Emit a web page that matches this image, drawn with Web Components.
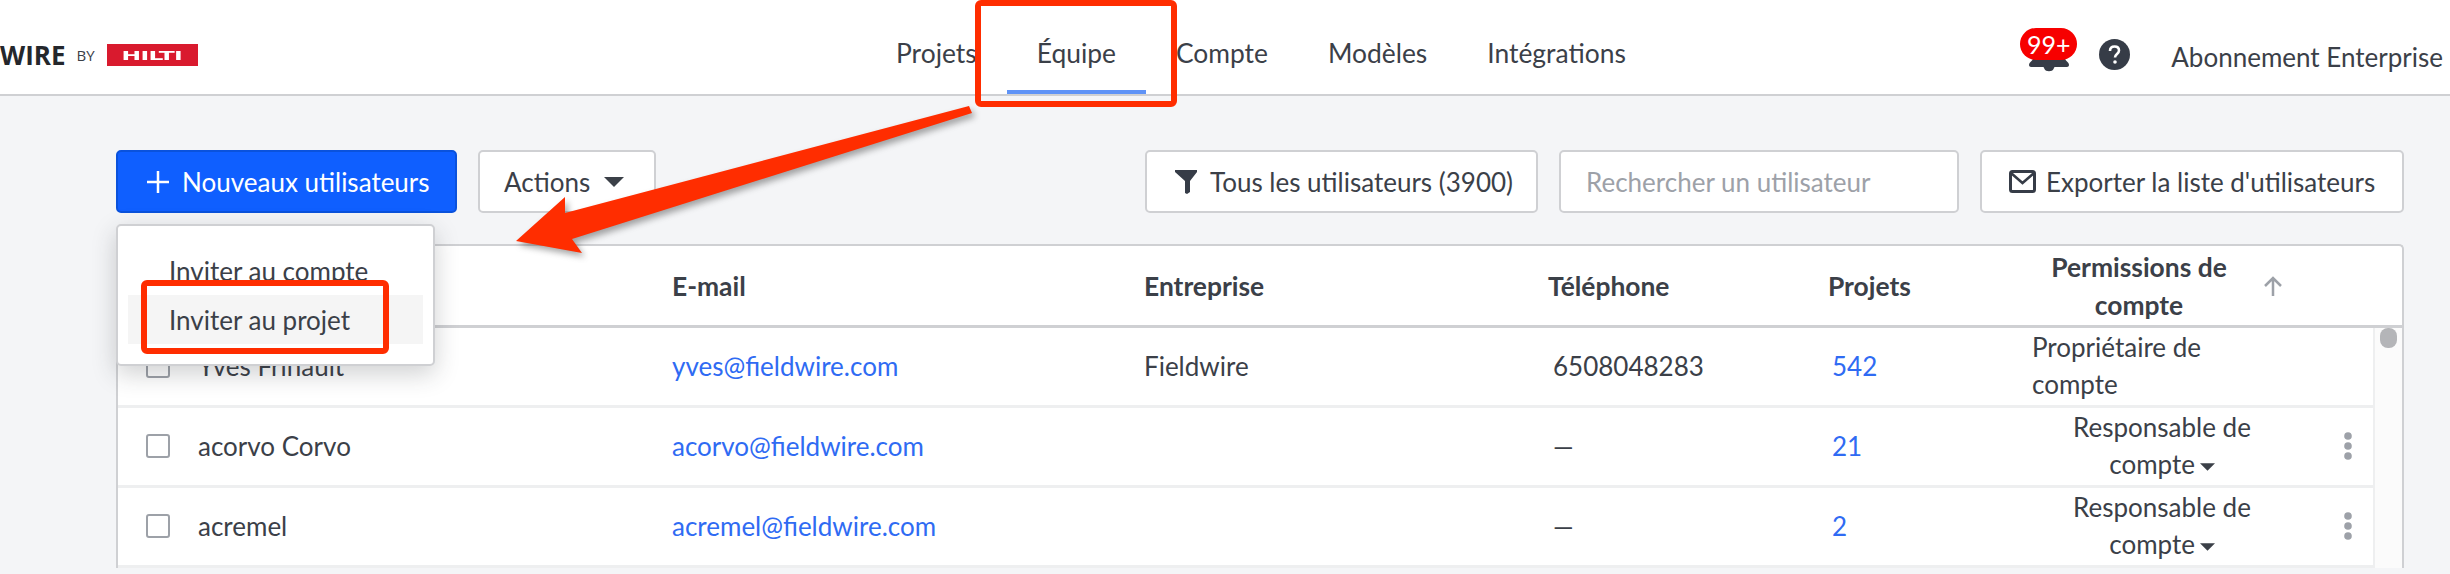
<!DOCTYPE html>
<html lang="fr">
<head>
<meta charset="utf-8">
<title>Équipe</title>
<style>
  html, body { margin: 0; height: 574px; overflow: hidden; }
  body { background: #f4f5f7; font: 26px/38px Lato, "Liberation Sans", sans-serif; color: #3b4048; }
</style>
</head>
<body>
<fw-topbar>
  <fw-tab>Projets</fw-tab>
  <fw-tab active>Équipe</fw-tab>
  <fw-tab>Compte</fw-tab>
  <fw-tab>Modèles</fw-tab>
  <fw-tab>Intégrations</fw-tab>
</fw-topbar>
<fw-main>
  <fw-toolbar></fw-toolbar>
  <fw-table>
    <fw-row name="Yves Frinault" email="yves@fieldwire.com" company="Fieldwire" phone="6508048283" projects="542" owner></fw-row>
    <fw-row name="acorvo Corvo" email="acorvo@fieldwire.com" phone="—" projects="21"></fw-row>
    <fw-row name="acremel" email="acremel@fieldwire.com" phone="—" projects="2"></fw-row>
  </fw-table>
  <fw-menu>
    <fw-menu-item>Inviter au compte</fw-menu-item>
    <fw-menu-item hover>Inviter au projet</fw-menu-item>
  </fw-menu>
</fw-main>
<fw-annotations></fw-annotations>

<script>
const caret = (w, h) => `<svg class="caret" width="${w}" height="${h}" viewBox="0 0 20 10"><path d="M0 0h20L10 10z" fill="#3b4048"/></svg>`;

class FwTopbar extends HTMLElement {
  constructor() {
    super();
    const shadowRoot = this.attachShadow({mode: 'open'});
    shadowRoot.innerHTML = `
      <style>
        :host {
          display: flex;
          height: 94px;
          background: #fff;
          border-bottom: 2px solid #cfd0d3;
        }
        .logo {
          width: 866px;
          display: flex;
          align-items: center;
          flex: none;
          padding-top: 16px;
          box-sizing: border-box;
        }
        .wire { font: 700 26px/30px "Open Sans", sans-serif; color: #24272c; }
        .by { font: 400 15px/20px "Open Sans", sans-serif; color: #3b4048; margin-left: 11px; }
        .hilti {
          width: 91px;
          height: 22px;
          margin-left: 12px;
          background: #d91a2e;
          display: flex;
          align-items: center;
          justify-content: center;
          overflow: hidden;
        }
        .hilti span {
          font: 900 13px/13px "DejaVu Sans", sans-serif;
          color: #fff;
          transform: scaleX(1.8);
          letter-spacing: -.4px;
        }
        nav { display: flex; font-size: 26.4px; }
        .right { margin-left: auto; display: flex; align-items: flex-start; }
        .bell { width: 57px; height: 44px; position: relative; margin-top: 28px; }
        .badge {
          position: absolute;
          left: 0;
          top: 0;
          width: 57px;
          height: 32px;
          border-radius: 16px;
          background: #f70000;
          color: #fff;
          font-size: 25px;
          line-height: 32px;
          text-align: center;
        }
        .help { margin: 39px 41px 0 22px; display: block; }
        .plan { margin: 38px 7px 0 0; white-space: nowrap; }
      </style>
      <div class="logo">
        <span class="wire">WIRE</span>
        <span class="by">BY</span>
        <span class="hilti"><span>HILTI</span></span>
      </div>
      <nav><slot></slot></nav>
      <div class="right">
        <div class="bell">
          <svg width="57" height="44" viewBox="0 0 57 44"><path d="M13 30h32c0 3 4 4 4 7 0 1-1 2-2 2H11c-1 0-2-1-2-2 0-3 4-4 4-7z" fill="#363c47"/><path d="M18 39h11l-1 2c-1 3-8 3-9 0z" fill="#363c47" transform="translate(5.500 0)"/></svg>
          <span class="badge">99+</span>
        </div>
        <svg class="help" width="31" height="31" viewBox="0 0 31 31"><circle cx="15.500" cy="15.500" r="15.500" fill="#363c47"/><path d="M11 12c0-3 2-4.500 4.600-4.500S20 9 20 11.500c0 3.500-4 3.500-4 7" fill="none" stroke="#fff" stroke-width="2.600"/><circle cx="16" cy="23" r="1.800" fill="#fff"/></svg>
        <span class="plan">Abonnement Enterprise</span>
      </div>
    `;
  }
}
customElements.define('fw-topbar', FwTopbar);

class FwTab extends HTMLElement {
  constructor() {
    super();
    const shadowRoot = this.attachShadow({mode: 'open'});
    shadowRoot.innerHTML = `
      <style>
        :host {
          display: flex;
          align-items: center;
          box-sizing: border-box;
          height: 94px;
          padding: 16px 30px 0;
          border-bottom: 4px solid transparent;
        }
        :host([active]) { border-bottom-color: #5f93f7; }
      </style>
      <slot></slot>
    `;
  }
}
customElements.define('fw-tab', FwTab);

class FwMain extends HTMLElement {
  constructor() {
    super();
    const shadowRoot = this.attachShadow({mode: 'open'});
    shadowRoot.innerHTML = `
      <style>
        :host {
          display: block;
          position: relative;
          padding: 54px 46px 0 116px;
        }
      </style>
      <slot></slot>
    `;
  }
}
customElements.define('fw-main', FwMain);

class FwButton extends HTMLElement {
  constructor() {
    super();
    const shadowRoot = this.attachShadow({mode: 'open'});
    shadowRoot.innerHTML = `
      <style>
        :host {
          display: flex;
          align-items: center;
          box-sizing: border-box;
          height: 63px;
          background: #fff;
          border: 2px solid #cfd0d3;
          border-radius: 5px;
          white-space: nowrap;
        }
        :host([primary]) {
          background: #0f5fff;
          border-color: #0a52dc;
          color: #fff;
        }
      </style>
      <slot></slot>
    `;
  }
}
customElements.define('fw-button', FwButton);

class FwToolbar extends HTMLElement {
  constructor() {
    super();
    const shadowRoot = this.attachShadow({mode: 'open'});
    shadowRoot.innerHTML = `
      <style>
        :host { display: flex; }
        fw-button { margin-right: 21px; }
        .new { width: 341px; padding-left: 29px; gap: 13px; }
        .actions { width: 178px; padding-left: 24px; gap: 14px; margin-right: auto; }
        .filter { width: 393px; padding-left: 28px; gap: 13px; }
        .search { width: 400px; padding-left: 25px; color: #9da1a8; }
        .export { width: 424px; padding-left: 27px; gap: 10px; margin-right: 0; }
      </style>
      <fw-button primary class="new">
        <svg width="22" height="22" viewBox="0 0 22 22"><path d="M11 0v22M0 11h22" stroke="#fff" stroke-width="2.500"/></svg>
        Nouveaux utilisateurs
      </fw-button>
      <fw-button class="actions">Actions ${caret(20, 10)}</fw-button>
      <fw-button class="filter">
        <svg width="22" height="24" viewBox="0 0 22 24"><path d="M0 0h22v2l-7 9v11l-3 2-2-1V11L0 2z" fill="#363c47"/></svg>
        Tous les utilisateurs (3900)
      </fw-button>
      <fw-button class="search">Rechercher un utilisateur</fw-button>
      <fw-button class="export">
        <svg width="27" height="23" viewBox="0 0 27 23"><rect x="1.500" y="1.500" width="24" height="20" rx="2" fill="none" stroke="#363c47" stroke-width="3"/><path d="M2 3l11.500 10L25 3" fill="none" stroke="#363c47" stroke-width="2.500"/></svg>
        Exporter la liste d'utilisateurs
      </fw-button>
    `;
  }
}
customElements.define('fw-toolbar', FwToolbar);

class FwTable extends HTMLElement {
  constructor() {
    super();
    const shadowRoot = this.attachShadow({mode: 'open'});
    shadowRoot.innerHTML = `
      <style>
        :host {
          display: block;
          margin-top: 31px;
          background: #fff;
          border: 2px solid #cfd0d3;
          border-bottom: 0;
          border-radius: 5px 5px 0 0;
        }
        .head {
          display: grid;
          grid-template-columns: 554px 472px 404px 280px 204px 1fr;
          align-items: center;
          height: 79px;
          border-bottom: 3px solid #cfd0d3;
          font-size: 26.4px;
          font-weight: 700;
        }
        .perm { display: flex; align-items: center; }
        .perm span { width: 214px; text-align: center; }
        .perm svg { margin-left: 16px; }
        .body { display: flex; }
        .rows { width: 2255px; }
        .track {
          flex: 1;
          background: #fbfbfb;
          border-left: 2px solid #eeeff0;
          padding-left: 5px;
        }
        .thumb { width: 17px; height: 20px; border-radius: 8px; background: #b4b5b8; }
      </style>
      <div class="head">
        <span></span>
        <span>E-mail</span>
        <span>Entreprise</span>
        <span>Téléphone</span>
        <span>Projets</span>
        <div class="perm">
          <span>Permissions de compte</span>
          <svg width="22" height="20" viewBox="0 0 22 20"><path d="M11 20V2M3 10l8-8 8 8" fill="none" stroke="#9da1a8" stroke-width="2.500"/></svg>
        </div>
      </div>
      <div class="body">
        <div class="rows"><slot></slot></div>
        <div class="track"><div class="thumb"></div></div>
      </div>
    `;
  }
}
customElements.define('fw-table', FwTable);

class FwRow extends HTMLElement {
  constructor() {
    super();
    const shadowRoot = this.attachShadow({mode: 'open'});
    const get = (n) => this.getAttribute(n) || '';
    const perm = this.hasAttribute('owner')
      ? `<div class="perm owner">Propriétaire de compte</div>`
      : `<div class="perm">Responsable de compte ${caret(15, 8)}</div>
         <svg class="dots" width="8" height="28" viewBox="0 0 8 28"><circle cx="4" cy="4" r="3.800" fill="#9da1a8"/><circle cx="4" cy="14" r="3.800" fill="#9da1a8"/><circle cx="4" cy="24" r="3.800" fill="#9da1a8"/></svg>`;
    shadowRoot.innerHTML = `
      <style>
        :host {
          display: grid;
          grid-template-columns: 554px 472px 405px 279px 204px 1fr;
          align-items: center;
          height: 75px;
          padding-bottom: 2px;
          border-bottom: 3px solid #eeeff0;
          white-space: nowrap;
        }
        .name { display: flex; align-items: center; padding-left: 28px; }
        .box {
          box-sizing: border-box;
          width: 24px;
          height: 24px;
          border: 2.500px solid #9da1a8;
          border-radius: 3px;
          margin-right: 28px;
        }
        a { color: #2f6bf3; text-decoration: none; }
        .phone { padding-left: 4px; }
        .count { padding-left: 4px; }
        .cell { display: flex; align-items: center; }
        .perm { width: 260px; white-space: normal; text-align: center; line-height: 37px; }
        .perm.owner { width: 220px; text-align: left; }
        .caret { vertical-align: 3px; margin-left: -2px; }
        .dots { margin-left: 52px; }
      </style>
      <div class="name"><span class="box"></span>${get('name')}</div>
      <a>${get('email')}</a>
      <div>${get('company')}</div>
      <div class="phone">${get('phone')}</div>
      <a class="count">${get('projects')}</a>
      <div class="cell">${perm}</div>
    `;
  }
}
customElements.define('fw-row', FwRow);

class FwMenu extends HTMLElement {
  constructor() {
    super();
    const shadowRoot = this.attachShadow({mode: 'open'});
    shadowRoot.innerHTML = `
      <style>
        :host {
          display: block;
          position: absolute;
          left: 116px;
          top: 128px;
          width: 319px;
          box-sizing: border-box;
          padding: 20px 10px;
          background: #fff;
          border: 2px solid #cfd0d3;
          border-radius: 5px;
          box-shadow: 0 8px 24px rgba(40, 44, 52, .22);
        }
      </style>
      <slot></slot>
    `;
  }
}
customElements.define('fw-menu', FwMenu);

class FwMenuItem extends HTMLElement {
  constructor() {
    super();
    const shadowRoot = this.attachShadow({mode: 'open'});
    shadowRoot.innerHTML = `
      <style>
        :host {
          display: flex;
          align-items: center;
          height: 49px;
          padding-left: 41px;
        }
        :host([hover]) { background: #f5f5f5; }
      </style>
      <slot></slot>
    `;
  }
}
customElements.define('fw-menu-item', FwMenuItem);

class FwAnnotations extends HTMLElement {
  constructor() {
    super();
    const shadowRoot = this.attachShadow({mode: 'open'});
    shadowRoot.innerHTML = `
      <style>
        :host { position: absolute; left: 0; top: 0; width: 2450px; height: 574px; pointer-events: none; }
        svg { display: block; }
        .arrow { filter: drop-shadow(3px 4px 3px rgba(60, 60, 60, .45)); }
      </style>
      <svg width="2450" height="574" viewBox="0 0 2450 574">
        <path class="arrow" d="M969 106 L972 113 L572 239 L582 253 L516 241 L565 197 L565 213 Z" fill="#ff2d00"/>
        <rect x="978" y="3" width="196" height="101" rx="3" fill="none" stroke="#ff2d00" stroke-width="6"/>
        <rect x="144" y="283" width="242" height="68" rx="3" fill="none" stroke="#ff2d00" stroke-width="6"/>
      </svg>
    `;
  }
}
customElements.define('fw-annotations', FwAnnotations);
</script>
</body>
</html>
